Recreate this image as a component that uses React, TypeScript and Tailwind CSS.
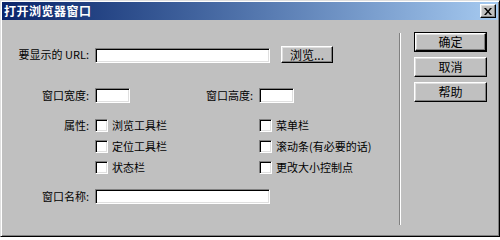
const font = { fontFamily: '"Noto Sans CJK SC", "Liberation Sans", sans-serif' }

const sunken =
  "bg-white border border-t-[#808080] border-l-[#808080] border-b-white border-r-white shadow-[inset_1px_1px_0_#000,inset_-1px_-1px_0_#dfdfdf]"

const raised =
  "bg-[#c0c0c0] border border-t-white border-l-white border-b-black border-r-black shadow-[inset_-1px_-1px_0_#808080,inset_1px_1px_0_#dfdfdf]"

function Field({ w }: { w: string }) {
  return <div className={`${sunken} ${w} h-[15px] shrink-0`} />
}

function Check({ label }: { label: string }) {
  return (
    <div className="flex items-center gap-[4px] h-[13px]">
      <div className={`${sunken} w-[13px] h-[13px] shrink-0`} />
      <span className="text-[11px] leading-none whitespace-nowrap">{label}</span>
    </div>
  )
}

function Btn({ label, primary }: { label: string; primary?: boolean }) {
  if (primary) {
    return (
      <div className="w-[73px] h-[20px] border border-black">
        <div className={`${raised} w-full h-full flex items-center justify-center text-[12px] leading-none`}>{label}</div>
      </div>
    )
  }
  return (
    <div className={`${raised} w-[73px] h-[20px] flex items-center justify-center text-[12px] leading-none`}>{label}</div>
  )
}

export default function App() {
  return (
    <div
      style={font}
      className="w-[500px] h-[237px] bg-[#c0c0c0] border border-t-[#dfdfdf] border-l-[#dfdfdf] border-b-black border-r-black shadow-[inset_1px_1px_0_#fff,inset_-1px_-1px_0_#808080] p-[1px] flex flex-col text-black overflow-hidden"
    >
      {/* title bar */}
      <div className="h-[18px] bg-gradient-to-r from-[#0a246a] to-[#a6caf0] flex items-center justify-between pl-[2px] pr-[2px] shrink-0">
        <span className="text-white text-[12px] font-bold tracking-[0.5px] leading-none">打开浏览器窗口</span>
        <div className={`${raised} w-[16px] h-[14px] flex items-center justify-center`}>
          <svg width="8" height="7" viewBox="0 0 8 7">
            <path d="M0 0h2l2 2.5L6 0h2L5 3.5 8 7H6L4 4.5 2 7H0l3-3.5z" fill="#000" />
          </svg>
        </div>
      </div>

      {/* body */}
      <div className="flex flex-1">
        <div className="w-[397px] pt-[26px] flex flex-col">
          <div className="flex items-end h-[17px]">
            <div className="w-[88px] text-right text-[11px] leading-none self-center pr-[1px]">要显示的 URL:</div>
            <div className="ml-[5px] flex items-end gap-[11px]">
              <Field w="w-[175px]" />
              <div className={`${raised} w-[52px] h-[17px] flex items-center justify-center text-[12px] leading-none`}>浏览...</div>
            </div>
          </div>

          <div className="flex items-center h-[15px] mt-[25px]">
            <div className="w-[88px] text-right text-[11px] leading-none pr-[1px]">窗口宽度:</div>
            <div className="ml-[5px] flex items-center">
              <Field w="w-[35px]" />
              <div className="w-[125px] text-right text-[11px] leading-none pr-[2px]">窗口高度:</div>
              <div className="ml-[4px]">
                <Field w="w-[35px]" />
              </div>
            </div>
          </div>

          <div className="flex mt-[16px]">
            <div className="w-[88px] text-right text-[11px] leading-[13px] pr-[1px]">属性:</div>
            <div className="ml-[5px] grid grid-cols-[164px_1fr] gap-y-[8px]">
              <Check label="浏览工具栏" />
              <Check label="菜单栏" />
              <Check label="定位工具栏" />
              <Check label="滚动条(有必要的话)" />
              <Check label="状态栏" />
              <Check label="更改大小控制点" />
            </div>
          </div>

          <div className="flex items-center h-[15px] mt-[15px]">
            <div className="w-[88px] text-right text-[11px] leading-none pr-[1px]">窗口名称:</div>
            <div className="ml-[5px]">
              <Field w="w-[175px]" />
            </div>
          </div>
        </div>

        {/* separator */}
        <div className="w-[2px] mt-[13px] mb-[10px] border-l border-l-[#808080] border-r border-r-white" />

        <div className="pl-[13px] pt-[12px] flex flex-col gap-[5px]">
          <Btn label="确定" primary />
          <Btn label="取消" />
          <Btn label="帮助" />
        </div>
      </div>
    </div>
  )
}
